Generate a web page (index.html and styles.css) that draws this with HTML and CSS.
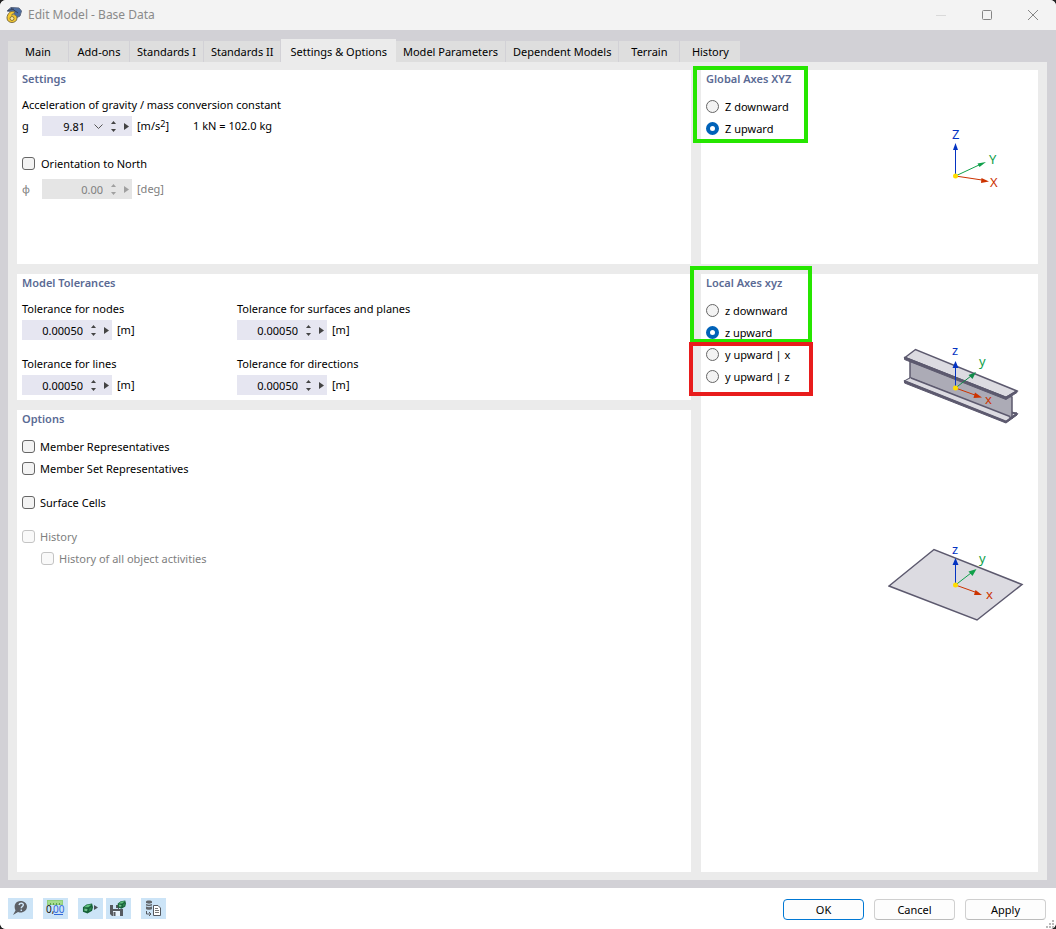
FILE: index.html
```html
<!DOCTYPE html>
<html lang="en">
<head>
<meta charset="utf-8">
<title>Edit Model - Base Data</title>
<link rel="stylesheet" href="styles.css">
</head>
<body>
<svg class="defs" aria-hidden="true">
  <defs>
    <symbol id="up" viewBox="0 0 5 3"><path d="M0 3L2.5 0L5 3z"/></symbol>
    <symbol id="down" viewBox="0 0 5 3"><path d="M0 0L2.5 3L5 0z"/></symbol>
    <symbol id="right" viewBox="0 0 5 7"><path d="M0 0L5 3.5L0 7z"/></symbol>
    <symbol id="cube" viewBox="0 0 12 11">
      <path d="M1 4L5 1L11 0L12 4L11 8L6 11L1 9z" fill="#17623a"/>
      <path d="M2 4L6 1.500L10.500 1L7 4z" fill="#5fbf7c"/>
      <path d="M2.500 5.500L6 6L5.500 8.500L2.500 8z" fill="#6fc088"/>
      <path d="M8 5.500L10.500 3.500L10 7L7.500 8.500z" fill="#2f8950"/>
    </symbol>
  </defs>
</svg>
<div class="window">
  <header class="titlebar">
    <svg class="app-icon" width="16" height="18" viewBox="0 0 16 18">
      <path d="M1 5L5 1.500L13 2L15.500 5L14 10L10 12L8 6z" fill="#4a6ea5" stroke="#5c6880" stroke-width="1"/>
      <path d="M2 4.500L8 3M5 2L12 7" stroke="#38425a" stroke-width="1"/>
      <path d="M9 6C5 3.500 1 8 1 12C1 18 11 18 11 12C11 9 8 8 5.500 9L9 6z" fill="#f6c92f" stroke="#7d7048" stroke-width="1"/>
      <circle cx="6" cy="12.500" r="2" fill="#fbeaa0" stroke="#8a7636" stroke-width="1"/>
    </svg>
    <h1 class="title">Edit Model - Base Data</h1>
    <div class="window-controls">
      <button type="button" aria-label="Minimize" disabled><svg width="10" height="10"><path d="M0 5.500H10" stroke="#d9d9d9"/></svg></button>
      <button type="button" aria-label="Maximize"><svg width="10" height="10"><rect x=".5" y=".5" width="9" height="9" rx="1" fill="none" stroke="#858585"/></svg></button>
      <button type="button" aria-label="Close"><svg width="10" height="10"><path d="M0 0L10 10M10 0L0 10" stroke="#858585"/></svg></button>
    </div>
  </header>

  <main class="content">
    <nav class="tabs" role="tablist">
      <button type="button" role="tab" class="tab">Main</button>
      <button type="button" role="tab" class="tab">Add-ons</button>
      <button type="button" role="tab" class="tab">Standards I</button>
      <button type="button" role="tab" class="tab">Standards II</button>
      <button type="button" role="tab" class="tab active" aria-selected="true">Settings &amp; Options</button>
      <button type="button" role="tab" class="tab">Model Parameters</button>
      <button type="button" role="tab" class="tab">Dependent Models</button>
      <button type="button" role="tab" class="tab">Terrain</button>
      <button type="button" role="tab" class="tab">History</button>
    </nav>

    <div class="panel">
      <section class="group settings">
        <h2>Settings</h2>
        <label class="caption" for="gravity">Acceleration of gravity / mass conversion constant</label>
        <div class="field">
          <label class="symbol" for="gravity">g</label>
          <div class="spin">
            <input id="gravity" type="text" value="9.81">
            <button type="button" class="drop" aria-label="Choose value"><svg width="9" height="5"><path d="M.5 .5L4.500 4.500L8.500 .5" fill="none" stroke="#555"/></svg></button>
            <span class="steps"><button type="button" aria-label="Increase"><svg width="5" height="3"><use href="#up"/></svg></button><button type="button" aria-label="Decrease"><svg width="5" height="3"><use href="#down"/></svg></button></span>
            <button type="button" class="more" aria-label="More"><svg width="5" height="7"><use href="#right"/></svg></button>
          </div>
          <span class="unit">[m/s<sup>2</sup>]</span>
          <span class="note">1 kN = 102.0 kg</span>
        </div>
        <label class="check north"><input type="checkbox">Orientation to North</label>
        <div class="field disabled">
          <label class="symbol" for="angle">ϕ</label>
          <div class="spin">
            <input id="angle" type="text" value="0.00" disabled>
            <span class="steps"><button type="button" aria-label="Increase" disabled><svg width="5" height="3"><use href="#up"/></svg></button><button type="button" aria-label="Decrease" disabled><svg width="5" height="3"><use href="#down"/></svg></button></span>
            <button type="button" class="more" aria-label="More" disabled><svg width="5" height="7"><use href="#right"/></svg></button>
          </div>
          <span class="unit">[deg]</span>
        </div>
      </section>

      <section class="group global-axes">
        <h2>Global Axes XYZ</h2>
        <div class="axes-body">
          <div class="choices">
            <label class="radio"><input type="radio" name="global">Z downward</label>
            <label class="radio"><input type="radio" name="global" checked>Z upward</label>
          </div>
          <div class="drawings">
            <svg width="136" height="80" viewBox="888 120 136 80" role="img" aria-label="Global axes">
              <path d="M955.500 176V150" stroke="#0433c2"/><path d="M953 150L955.500 143L958 150z" fill="#0433c2"/>
              <path d="M955.500 176L979 165" stroke="#10a04a"/><path d="M977.500 163.500L986 162L979.500 167z" fill="#10a04a"/>
              <path d="M955.500 176L982 180" stroke="#cc3300"/><path d="M981.500 178L989 181.500L981 183z" fill="#cc3300"/>
              <circle cx="955.500" cy="176" r="2.500" fill="#ffdc00"/>
              <text x="952" y="139" fill="#0433c2" class="axis">Z</text>
              <text x="989" y="164" fill="#10a04a" class="axis">Y</text>
              <text x="990" y="187" fill="#cc3300" class="axis">X</text>
            </svg>
          </div>
        </div>
        <div class="mark mark-global"></div>
      </section>

      <section class="group tolerances">
        <h2>Model Tolerances</h2>
        <div class="tolerance-grid">
          <div>
            <label class="caption" for="tol-nodes">Tolerance for nodes</label>
            <div class="field"><div class="spin"><input id="tol-nodes" type="text" value="0.00050"><span class="steps"><button type="button" aria-label="Increase"><svg width="5" height="3"><use href="#up"/></svg></button><button type="button" aria-label="Decrease"><svg width="5" height="3"><use href="#down"/></svg></button></span><button type="button" class="more" aria-label="More"><svg width="5" height="7"><use href="#right"/></svg></button></div><span class="unit">[m]</span></div>
          </div>
          <div>
            <label class="caption" for="tol-surfaces">Tolerance for surfaces and planes</label>
            <div class="field"><div class="spin"><input id="tol-surfaces" type="text" value="0.00050"><span class="steps"><button type="button" aria-label="Increase"><svg width="5" height="3"><use href="#up"/></svg></button><button type="button" aria-label="Decrease"><svg width="5" height="3"><use href="#down"/></svg></button></span><button type="button" class="more" aria-label="More"><svg width="5" height="7"><use href="#right"/></svg></button></div><span class="unit">[m]</span></div>
          </div>
          <div>
            <label class="caption" for="tol-lines">Tolerance for lines</label>
            <div class="field"><div class="spin"><input id="tol-lines" type="text" value="0.00050"><span class="steps"><button type="button" aria-label="Increase"><svg width="5" height="3"><use href="#up"/></svg></button><button type="button" aria-label="Decrease"><svg width="5" height="3"><use href="#down"/></svg></button></span><button type="button" class="more" aria-label="More"><svg width="5" height="7"><use href="#right"/></svg></button></div><span class="unit">[m]</span></div>
          </div>
          <div>
            <label class="caption" for="tol-directions">Tolerance for directions</label>
            <div class="field"><div class="spin"><input id="tol-directions" type="text" value="0.00050"><span class="steps"><button type="button" aria-label="Increase"><svg width="5" height="3"><use href="#up"/></svg></button><button type="button" aria-label="Decrease"><svg width="5" height="3"><use href="#down"/></svg></button></span><button type="button" class="more" aria-label="More"><svg width="5" height="7"><use href="#right"/></svg></button></div><span class="unit">[m]</span></div>
          </div>
        </div>
      </section>

      <section class="group local-axes">
        <h2>Local Axes xyz</h2>
        <div class="axes-body">
          <div class="choices">
            <label class="radio"><input type="radio" name="local">z downward</label>
            <label class="radio"><input type="radio" name="local" checked>z upward</label>
            <label class="radio"><input type="radio" name="local">y upward | x</label>
            <label class="radio"><input type="radio" name="local">y upward | z</label>
          </div>
          <div class="drawings">
            <svg width="136" height="90" viewBox="888 340 136 90" role="img" aria-label="Member axes">
              <path d="M905 381L911 377.500L1017 414L1006 422z" fill="#dcdbe1" stroke="#5c596e" stroke-width="1.500"/>
              <path d="M910 361L1012 397V418L910 378z" fill="#acabb6" stroke="#5c596e" stroke-width="1.500"/>
              <path d="M905 381L911 378L1010 416L1006 421z" fill="#dcdbe1"/>
              <path d="M911 378L1010 416.500M1012 413H1017" stroke="#5c596e" stroke-width="1.500"/>
              <path d="M904.500 380.500V383L1006 423L1017 415V413L1006 421z" fill="#5c596e" stroke="#5c596e"/>
              <path d="M905 357.500L915.500 349.500L1017 391L1006 397.500z" fill="#dcdbe1" stroke="#5c596e" stroke-width="1.500"/>
              <path d="M904.500 357V359.500L1006 399.500L1017 392.500V390.500L1006 397z" fill="#5c596e" stroke="#5c596e"/>
              <path d="M955.500 388V368" stroke="#0433c2"/><path d="M952.500 368L955.500 361L958.500 368z" fill="#0433c2"/>
              <path d="M955.500 388L971 376" stroke="#128c4b"/><path d="M968.500 375L976 372L972.500 379z" fill="#128c4b"/>
              <path d="M955.500 388L975 395" stroke="#cc3300"/><path d="M975 392.500L982 397.500L973.500 398z" fill="#cc3300"/>
              <circle cx="955.500" cy="388" r="2.500" fill="#ffdc00"/>
              <text x="952" y="355" fill="#0433c2" class="axis">z</text>
              <text x="979" y="366" fill="#10a04a" class="axis">y</text>
              <text x="985" y="404" fill="#cc3300" class="axis">x</text>
            </svg>
            <svg width="136" height="90" viewBox="888 538 136 90" role="img" aria-label="Surface axes">
              <path d="M889 586L934 549.500L1022 584.500L977 620z" fill="#dcdbe1" stroke="#5c596e" stroke-width="1.500"/>
              <path d="M955.500 585V565" stroke="#0433c2"/><path d="M952.500 565L955.500 558L958.500 565z" fill="#0433c2"/>
              <path d="M955.500 585L971 573" stroke="#10a04a"/><path d="M968.500 571.500L976.500 569L972.500 576z" fill="#10a04a"/>
              <path d="M955.500 585L975 592" stroke="#cc3300"/><path d="M975.500 590L982 595L974 595z" fill="#cc3300"/>
              <circle cx="955.500" cy="585" r="2.500" fill="#ffdc00"/>
              <text x="952" y="554" fill="#0433c2" class="axis">z</text>
              <text x="979" y="563" fill="#10a04a" class="axis">y</text>
              <text x="986" y="599" fill="#cc3300" class="axis">x</text>
            </svg>
          </div>
        </div>
        <div class="mark mark-z"></div>
        <div class="mark mark-y"></div>
      </section>

      <section class="group options">
        <h2>Options</h2>
        <div class="choices">
          <label class="check"><input type="checkbox">Member Representatives</label>
          <label class="check"><input type="checkbox">Member Set Representatives</label>
          <label class="check spaced"><input type="checkbox">Surface Cells</label>
          <label class="check spaced disabled"><input type="checkbox" disabled>History</label>
          <label class="check nested disabled"><input type="checkbox" disabled>History of all object activities</label>
        </div>
      </section>
    </div>
  </main>

  <footer class="footer">
    <div class="tools">
      <button type="button" class="tool" aria-label="Help">
        <svg width="25" height="21"><path d="M12.500 3C16.500 3 19 5.500 19 8.500C19 12 16 14.500 12.500 14.500C11 14.500 10.500 14.300 10 14L5 17L7.500 12.500C5 7 8 3 12.500 3z" fill="#5c6066"/><path d="M11 7C11.500 4.800 15.500 4.800 15.300 7C15.200 8.500 13.300 8.500 13.300 10.200M13.300 11.500V13" fill="none" stroke="#cce4f7" stroke-width="1.500"/></svg>
      </button>
      <button type="button" class="tool" aria-label="Units and decimal places">
        <svg width="25" height="21"><rect x="4.500" y="2.500" width="15" height="4" fill="#a5dc8d" stroke="#8fcf7c"/><path d="M7.500 5V7M10.500 5V7M13.500 5V7M16.500 5V7" stroke="#5da04d"/><text x="3" y="15" class="digits" fill="#111">0,</text><text x="10" y="15" class="digits" fill="#3268d8">00</text><path d="M11 16.500H20" stroke="#3268d8"/></svg>
      </button>
      <button type="button" class="tool" aria-label="Model display">
        <svg width="25" height="21"><use href="#cube" x="4" y="5" width="11" height="11"/><path d="M16 7L20 9.500L16 12z" fill="#4c5058"/></svg>
      </button>
      <button type="button" class="tool joined" aria-label="Save as default">
        <svg width="25" height="21"><path d="M4 7H13V11H17V18H6L4 16z" fill="#565a60"/><path d="M7 7H12V11H7z" fill="#cce4f7"/><path d="M10 7H12V10H10z" fill="#565a60"/><path d="M7 13H14V18H7z" fill="#e8f3fc"/><path d="M8.500 14V18" stroke="#565a60" stroke-width="2"/><use href="#cube" x="11" y="2" width="9" height="9"/></svg>
      </button>
      <button type="button" class="tool" aria-label="Copy data">
        <svg width="25" height="21"><path d="M5 3.500C5 2 11 2 11 3.500V11C11 12 5 12 5 11z" fill="#62666b"/><path d="M5 5.500Q8 7 11 5.500M5 8Q8 9.500 11 8" fill="none" stroke="#cce4f7"/><path d="M5.500 13V16H9M8 14L10 16L8 18" fill="none" stroke="#555960"/><path d="M12.500 7.500H17L19.500 10V17.500H12.500z" fill="#fff" stroke="#555960"/><path d="M14 10.500H17M14 12.500H18M14 14.500H18" stroke="#777"/></svg>
      </button>
    </div>
    <div class="actions">
      <button type="button" class="action primary">OK</button>
      <button type="button" class="action">Cancel</button>
      <button type="button" class="action">Apply</button>
    </div>
    <svg class="grip" width="10" height="8" aria-hidden="true"><path d="M7 0h2v2h-2zM4 3h2v2h-2zM7 3h2v2h-2zM1 6h2v2h-2zM4 6h2v2h-2zM7 6h2v2h-2z" fill="#bababa"/></svg>
  </footer>
</div>
</body>
</html>
```
FILE: styles.css
```css
* { box-sizing: border-box; }

html { background: #222; }

body {
  margin: 0;
  font: 11px/18px "Noto Sans", "Open Sans", sans-serif;
  color: #000;
}

button, input { font: inherit; color: inherit; }
button { border: 0; padding: 0; background: none; display: flex; align-items: center; justify-content: center; }
h1, h2 { margin: 0; }
.defs { position: absolute; width: 0; height: 0; }

.window {
  display: flex;
  flex-direction: column;
  min-height: 100vh;
  background: #fff;
  border-radius: 6px;
  overflow: hidden;
}

.titlebar {
  display: flex;
  align-items: center;
  gap: 6px;
  height: 30px;
  padding-left: 6px;
  background: #f3f3f3;
}
.title { font-size: 12px; font-weight: 400; color: #8a8a8a; }
.window-controls { display: flex; margin-left: auto; }
.window-controls button { width: 46px; height: 28px; }

.content {
  flex: 1;
  display: flex;
  flex-direction: column;
  padding: 9px 9px 8px 8px;
  background: #d2d1d6;
}

.tabs { display: flex; align-items: flex-end; height: 23px; }
.tab {
  min-width: 61px;
  height: 21px;
  padding: 0 7px;
  background: #dedede;
  border-right: 1px solid #d2d1d6;
  white-space: nowrap;
}
.tab.active { height: 23px; padding: 2px 9px 0; background: #ebebeb; border: 0; }

.panel {
  flex: 1;
  display: grid;
  grid-template-columns: 2fr 1fr;
  grid-template-rows: minmax(194px, auto) auto 1fr;
  grid-template-areas: "settings global" "tolerances local" "options local";
  gap: 10px;
  padding: 8px 9px;
  background: #ebebeb;
}
.settings { grid-area: settings; }
.global-axes { grid-area: global; }
.tolerances { grid-area: tolerances; }
.local-axes { grid-area: local; }
.options { grid-area: options; }

.group { position: relative; padding: 0 5px 5px; background: #fff; }
.group h2 { margin-bottom: 8px; font-size: 11px; font-weight: 600; color: #5a6a94; }

.caption { display: block; margin-bottom: 2px; }
.field { display: flex; align-items: center; height: 20px; }
.field.disabled, .check.disabled { color: #808080; }
.symbol { width: 20px; }
.unit { margin-left: 5px; }
.unit sup { font-size: 9px; line-height: 0; vertical-align: 3px; }
.note { margin-left: 24px; }

.spin { display: flex; align-items: center; width: 90px; height: 20px; background: #e6e6f1; fill: #444; }
.spin input { flex: 1; min-width: 0; height: 20px; padding: 0 4px 0 0; border: 0; background: none; text-align: right; outline: 0; }
.spin .drop { width: 18px; height: 20px; }
.steps { display: flex; flex-direction: column; gap: 5px; width: 13px; align-items: center; }
.steps button { height: 3px; }
.more { width: 12px; height: 20px; }
.disabled .spin { background: #e5e5e5; fill: #a0a0a0; }

.check, .radio { display: flex; align-items: center; gap: 5px; height: 22px; }
.radio { gap: 6px; }
.check input, .radio input {
  appearance: none;
  flex: none;
  width: 13px;
  height: 13px;
  margin: 0 0 1px;
  border: 1px solid #666;
  border-radius: 3px;
  background: #f3f3f3;
}
.radio input { border-radius: 50%; }
.radio input:checked { border: 4px solid #0062b8; background: #fff; }
.check input:disabled { border-color: #c4c4c4; background: #f9f9f9; }
.north { height: 18px; margin: 19px 0 6px; gap: 6px; }
.spaced { margin-top: 12px; }
.nested { margin-left: 19px; }

.tolerance-grid { display: grid; grid-template-columns: 215px 1fr; row-gap: 15px; }

.axes-body { display: flex; justify-content: space-between; }
.drawings { display: flex; flex-direction: column; padding-right: 9px; }
.global-axes .drawings { padding-top: 24px; }
.local-axes .drawings { padding-top: 40px; gap: 108px; }
.axis { font: 13px "Noto Sans", sans-serif; }
.digits { font: 10px "Noto Sans", sans-serif; }

.mark { position: absolute; border: 4px solid #26e600; pointer-events: none; }
.mark-global { left: -8px; top: -4px; width: 115px; height: 77px; }
.mark-z { left: -11px; top: -8px; width: 122px; height: 77px; }
.mark-y { left: -12px; top: 68px; width: 124px; height: 54px; border-color: #e81c1c; }

.footer {
  position: relative;
  display: flex;
  align-items: center;
  justify-content: space-between;
  height: 41px;
  padding: 0 10px 0 8px;
  background: #fff;
}
.tools, .actions { display: flex; gap: 10px; }
.actions { padding-top: 2px; }
.tool { width: 25px; height: 21px; background: #cce4f7; }
.tool.joined { margin-left: -7px; }
.action { width: 81px; height: 21px; border: 1px solid #d0d0d0; border-bottom-color: #bcbcbc; border-radius: 4px; background: #fdfdfd; }
.action.primary { border-color: #0078d4; }
.grip { position: absolute; right: 1px; bottom: 1px; }
```
